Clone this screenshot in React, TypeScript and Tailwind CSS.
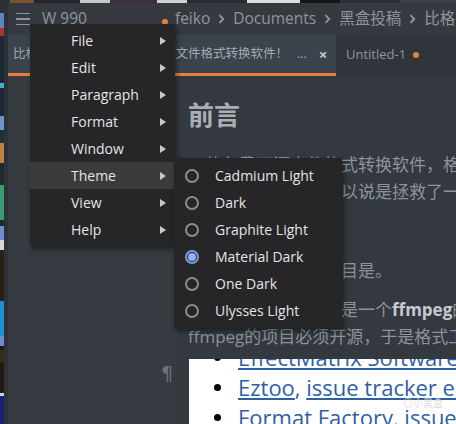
import React from "react";

const menuItems = ["File", "Edit", "Paragraph", "Format", "Window", "Theme", "View", "Help"];
const themes = [
  { name: "Cadmium Light", sel: false },
  { name: "Dark", sel: false },
  { name: "Graphite Light", sel: false },
  { name: "Material Dark", sel: true },
  { name: "One Dark", sel: false },
  { name: "Ulysses Light", sel: false },
];

function Arrow() {
  return (
    <svg width="6" height="8" viewBox="0 0 6 8" className="shrink-0">
      <path d="M0 0L6 4L0 8Z" fill="#c9c9c9" />
    </svg>
  );
}

function Chevron() {
  return (
    <svg width="7" height="10" viewBox="0 0 7 10" className="shrink-0">
      <path d="M1.5 1.2L5.2 5L1.5 8.8" stroke="#8f959c" strokeWidth="1.9" fill="none" />
    </svg>
  );
}

function Radio({ sel }: { sel: boolean }) {
  if (sel) {
    return (
      <div className="w-[14px] h-[14px] shrink-0 rounded-full border-[2px] border-[#7d9fd6] flex items-center justify-center">
        <div className="w-[8px] h-[8px] rounded-full bg-[#8ab4ff]" />
      </div>
    );
  }
  return <div className="w-[14px] h-[14px] shrink-0 rounded-full border-[2px] border-[#8c8c8c]" />;
}

const leftSegs: [number, string][] = [
  [10, "#2a2f38"],
  [15, "#5b86c6"],
  [8, "#b03030"],
  [47, "#1a2838"],
  [5, "#3fb0d0"],
  [28, "#1a2838"],
  [14, "#6d93cf"],
  [13, "#22303c"],
  [20, "#c08040"],
  [22, "#1e2a30"],
  [35, "#3a9a70"],
  [6, "#1e2a30"],
  [14, "#6a8fcf"],
  [10, "#d8d8d8"],
  [51, "#2a2018"],
  [35, "#1e90d8"],
  [10, "#6a8fcf"],
  [4, "#1a1a1a"],
  [13, "#3a2a18"],
  [30, "#201a14"],
  [3, "#d0d0e0"],
  [31, "#1a2070"],
];

const topSegs: [number, string][] = [
  [10, "#2a2f38"],
  [24, "#7a5430"],
  [46, "#23262b"],
  [30, "#c8c8c8"],
  [47, "#3a3040"],
  [30, "#d0d0d0"],
  [60, "#2a2a30"],
  [53, "#dcdcdc"],
  [40, "#151515"],
  [60, "#2c2c33"],
  [56, "#404048"],
];

export default function App() {
  return (
    <div className="w-[456px] h-[424px] overflow-hidden relative flex flex-col bg-[#34383f] font-['Open_Sans','Noto_Sans_CJK_SC',sans-serif]">
      {/* desktop top strip */}
      <div className="h-[3px] flex shrink-0">
        {topSegs.map(([w, c], i) => (
          <div key={i} style={{ width: w, background: c }} className="shrink-0" />
        ))}
      </div>
      <div className="flex flex-1 min-h-0">
        {/* desktop left strip */}
        <div className="w-[4px] flex flex-col shrink-0">
          {leftSegs.map(([h, c], i) => (
            <div key={i} style={{ height: h, background: c }} className="shrink-0" />
          ))}
        </div>
        <div className="w-[4px] bg-[#2e3237] shrink-0" />
        {/* window */}
        <div className="flex-1 flex flex-col min-w-0">
          {/* title bar */}
          <div className="h-[32px] shrink-0 bg-[#363a40] flex items-center overflow-hidden text-[15.5px] text-[#8f959c] whitespace-nowrap">
            <div className="ml-[8px] w-[14px] shrink-0 flex flex-col gap-[4px]">
              <div className="h-[1.5px] bg-[#8f959c]" />
              <div className="h-[1.5px] bg-[#8f959c]" />
              <div className="h-[1.5px] bg-[#8f959c]" />
            </div>
            <div className="ml-[12px] shrink-0">W 990</div>
            <div className="ml-[75px] w-[6px] h-[6px] shrink-0 rounded-full bg-[#e8803a] mt-[5px]" />
            <div className="ml-[7px] shrink-0 flex items-center gap-[8px]">
              <span>feiko</span>
              <Chevron />
              <span>Documents</span>
              <Chevron />
              <span>黑盒投稿</span>
              <Chevron />
              <span>比格式工厂</span>
            </div>
          </div>
          {/* tab bar */}
          <div className="h-[41px] shrink-0 bg-[#30353b] flex overflow-hidden whitespace-nowrap">
            <div className="w-[328px] shrink-0 bg-[#3b434c] border-b-[3px] border-[#e8803a] flex items-center pl-[5px] text-[12.5px] text-[#a2a9b0]">
              <span className="shrink-0">比格式工厂更好用的免费开源文件格式转换软件！</span>
              <span className="ml-[9px] shrink-0">…</span>
              <span className="ml-[12px] shrink-0 text-[#c3c8cd] text-[15px] font-bold leading-none">×</span>
            </div>
            <div className="flex items-center shrink-0 pl-[10px] text-[13px] text-[#8d949b] pb-[2px]">
              <span>Untitled-1</span>
              <div className="ml-[7px] w-[6px] h-[6px] rounded-full bg-[#e8803a]" />
            </div>
          </div>
          {/* body */}
          <div className="flex-1 flex min-h-0">
            <div className="w-[170px] shrink-0 bg-[#363a41] flex flex-col items-end pr-[5px] pt-[286px]">
              <span className="text-[19px] leading-[22px] text-[#6b7179] font-['DejaVu_Sans',sans-serif]">¶</span>
            </div>
            <div className="flex-1 min-w-0 flex flex-col pl-[10px] pt-[21px] overflow-hidden text-[#8c939b]">
              <div className="h-[36px] leading-[36px] text-[26px] font-bold text-[#a8afb7]">前言</div>
              <div className="mt-[19px] text-[17px] leading-[26.5px] whitespace-nowrap">
                <div>一款免费开源文件格式转换软件，格式工厂的替代</div>
                <div>厂的替代品，几乎可以说是拯救了一大批用户</div>
                <div>无数需要转换格式的</div>
                <div>用户，但</div>
                <div>它依赖的开源核心项目是。</div>
              </div>
              <div className="mt-[12.5px] text-[17px] leading-[26.5px] whitespace-nowrap">
                <div>
                  格式工厂的核心其实是一个<b className="text-[#c5cad0]">ffmpeg</b>的图形界面
                </div>
                <div>ffmpeg的项目必须开源，于是格式工厂</div>
              </div>
              <div className="mt-[9px] ml-[1px] flex-1 bg-white overflow-hidden relative text-[22px] leading-[30px] text-[#2f5fa7] whitespace-nowrap">
                <div className="-mt-[17px]">
                  <div className="h-[30px] flex items-center pl-[25px] gap-[17px]">
                    <div className="w-[7px] h-[7px] rounded-full bg-black shrink-0" />
                    <span className="underline">EffectMatrix Software, issue tracker</span>
                  </div>
                  <div className="h-[30px] flex items-center pl-[25px] gap-[17px]">
                    <div className="w-[7px] h-[7px] rounded-full bg-black shrink-0" />
                    <span>
                      <span className="underline">Eztoo</span>, <span className="underline">issue tracker entry</span>
                    </span>
                  </div>
                  <div className="h-[30px] flex items-center pl-[25px] gap-[17px]">
                    <div className="w-[7px] h-[7px] rounded-full bg-black shrink-0" />
                    <span>
                      <span className="underline">Format Factory</span>, <span className="underline">issue tracker</span>
                    </span>
                  </div>
                </div>
                <div className="absolute right-[13px] top-[38px] text-[10px] leading-[12px] text-[#dcdcdc]">◎小黑盒</div>
              </div>
            </div>
          </div>
        </div>
      </div>

      {/* main menu */}
      <div className="absolute left-[30px] top-[24px] w-[145px] h-[222px] bg-[#262628] pt-[3px] shadow-[2px_3px_5px_rgba(0,0,0,0.45)] text-[14px] text-[#e4e4e4]">
        {menuItems.map((m) => (
          <div
            key={m}
            className={`h-[27px] flex items-center justify-between pl-[41px] pr-[9px] ${m === "Theme" ? "bg-[#3b3b3c]" : ""}`}
          >
            <span>{m}</span>
            <Arrow />
          </div>
        ))}
      </div>

      {/* theme submenu */}
      <div className="absolute left-[174px] top-[158px] w-[168px] h-[170px] bg-[#262628] pt-[4px] shadow-[2px_3px_5px_rgba(0,0,0,0.45)] text-[14px] text-[#e4e4e4]">
        {themes.map((t) => (
          <div key={t.name} className="h-[27px] flex items-center pl-[11px]">
            <Radio sel={t.sel} />
            <span className="ml-[16px]">{t.name}</span>
          </div>
        ))}
      </div>
    </div>
  );
}
